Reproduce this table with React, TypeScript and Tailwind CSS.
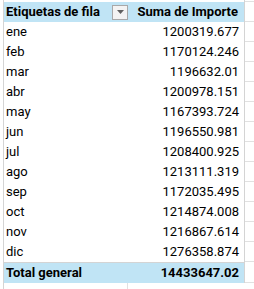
import { ReactNode } from 'react';

const rows = [
  ['ene', '1200319.677'],
  ['feb', '1170124.246'],
  ['mar', '1196632.01'],
  ['abr', '1200978.151'],
  ['may', '1167393.724'],
  ['jun', '1196550.981'],
  ['jul', '1208400.925'],
  ['ago', '1213111.319'],
  ['sep', '1172035.495'],
  ['oct', '1214874.008'],
  ['nov', '1216867.614'],
  ['dic', '1276358.874'],
];

const Row = ({ children, className = '' }: { children: ReactNode; className?: string }) => (
  <div className="flex">
    <div className="w-[4px] shrink-0 border-r border-[#d4d4d4]" />
    <div className={`flex w-[241px] shrink-0 border-r border-[#d4d4d4] ${className}`}>{children}</div>
    <div className="flex-1 border-b border-[#e1e1e1]" />
  </div>
);

const App = () => {
  return (
    <div
      className="w-[254px] h-[289px] overflow-hidden bg-white text-[13px] text-black"
      style={{ fontFamily: 'Roboto, "Noto Sans", sans-serif' }}
    >
      <Row className="h-[2px]">{null}</Row>

      <Row className="h-[20px] bg-[#c0e4f5] font-bold">
        <div className="flex w-[126px] items-center pl-[2px]">
          <span>Etiquetas de fila</span>
          <span className="ml-auto mr-[2px] flex h-[15px] w-[16px] items-center justify-center border border-[#a8a8a8] bg-[#f3f3f3]">
            <svg width="7" height="4" viewBox="0 0 7 4">
              <path d="M0 0h7L3.5 4z" fill="#606060" />
            </svg>
          </span>
        </div>
        <div className="flex flex-1 items-center justify-end pr-[6px]">Suma de Importe</div>
      </Row>

      {rows.map(([mes, valor]) => (
        <Row key={mes} className="h-[20px]">
          <div className="flex w-[126px] items-center pl-[2px]">{mes}</div>
          <div className="flex flex-1 items-center justify-end pr-[5px]">{valor}</div>
        </Row>
      ))}

      <Row className="h-[21px] border-t border-[#6aaed0] bg-[#c0e4f5] font-bold">
        <div className="flex w-[126px] items-center pl-[2px]">Total general</div>
        <div className="flex flex-1 items-center justify-end pr-[5px]">14433647.02</div>
      </Row>

      <div className="flex h-[6px]">
        <div className="w-[4px] shrink-0 border-r border-[#d4d4d4]" />
        <div className="w-[124px] shrink-0 border-r border-[#e1e1e1]" />
      </div>
    </div>
  );
};

export default App;
